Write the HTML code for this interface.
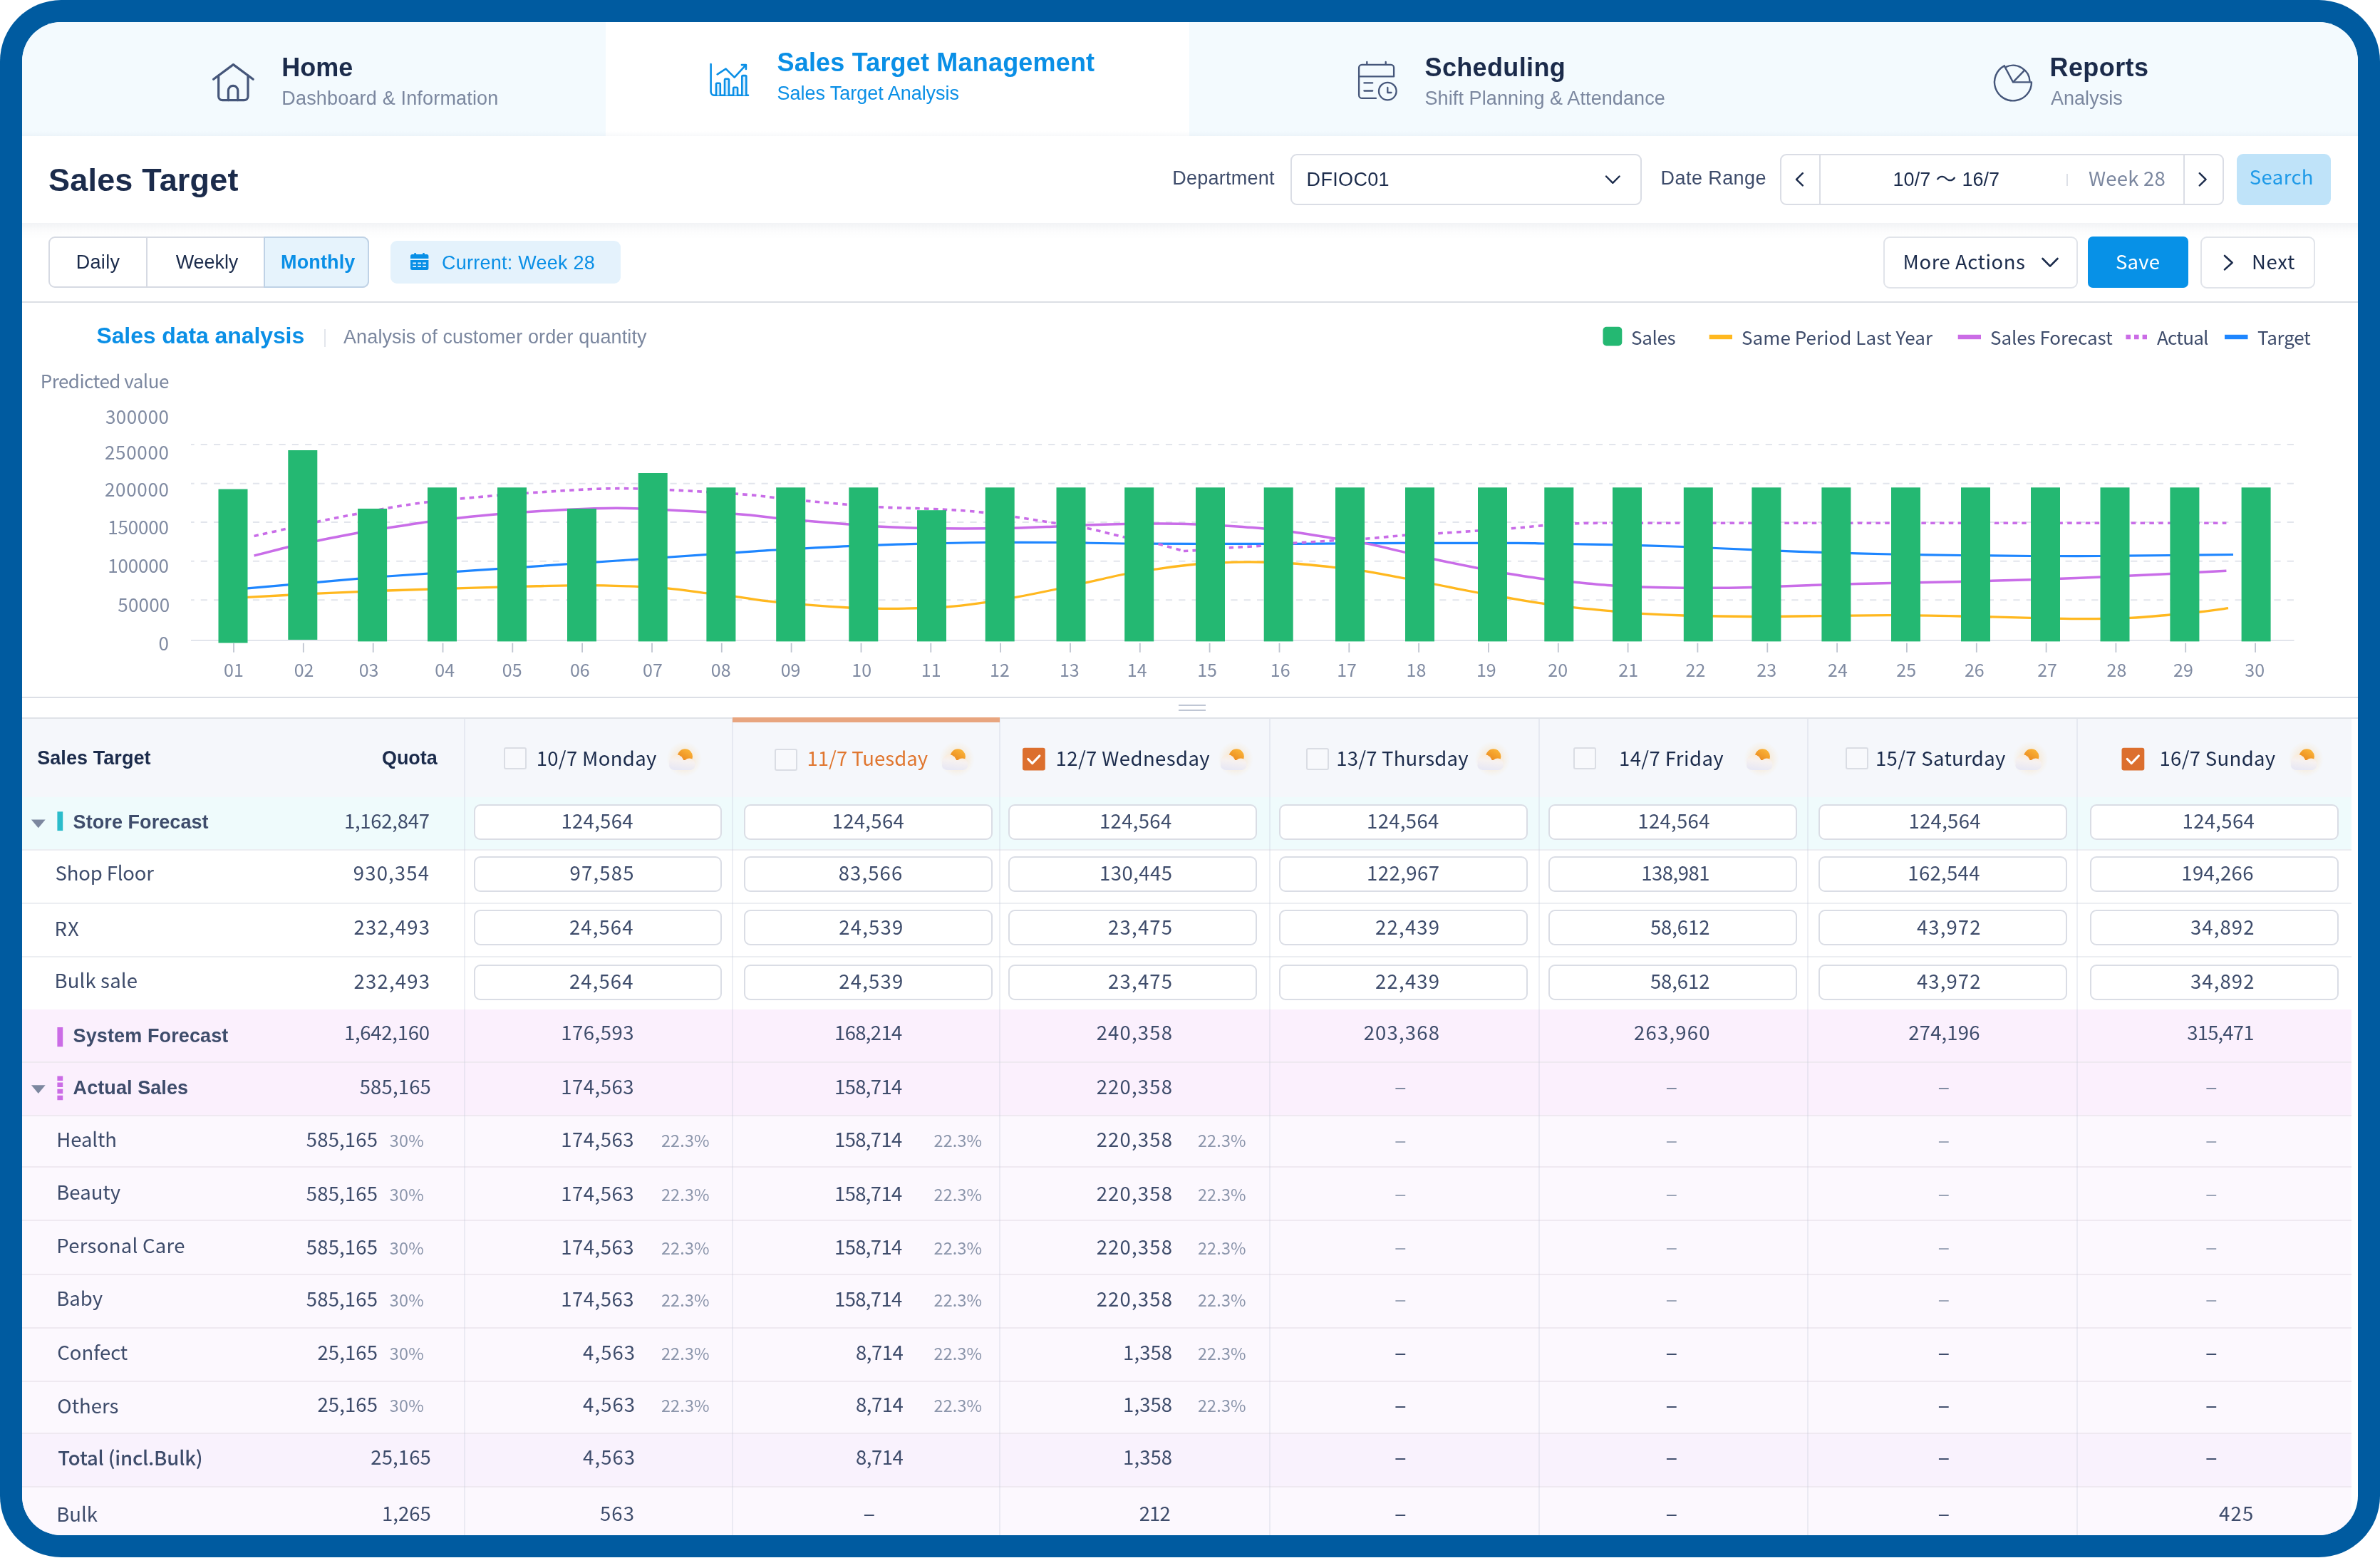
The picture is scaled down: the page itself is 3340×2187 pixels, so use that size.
<!DOCTYPE html>
<html lang="en"><head><meta charset="utf-8"><title>Sales Target</title>
<style>
html,body{margin:0;padding:0;background:#FFFFFF;overflow:hidden;}
body{width:3340px;height:2187px;position:relative;overflow:hidden;}
.frame{position:absolute;left:0;top:0;width:3340px;height:2186.3px;background:#005BA0;border-radius:86px;}
.screen{position:absolute;left:31px;top:31px;width:3277.5px;height:2124px;border-radius:55px;overflow:hidden;background:#FFFFFF;}
.page{position:absolute;left:-31px;top:-31px;width:3340px;height:2187px;will-change:transform;}
.b{position:absolute;}
.t{position:absolute;white-space:pre;line-height:1;}
.a{font-family:"Liberation Sans", Arial, sans-serif;}
.p{font-family:"Noto Sans CJK SC", "Liberation Sans", sans-serif;}
svg.v{position:absolute;left:0;top:0;}
</style></head><body>
<div class="frame"></div>
<div class="screen"><div class="page">
<div class="b" style="left:31.0px;top:31.0px;width:3278.0px;height:160.0px;background:#F3FAFE;"></div>
<div class="b" style="left:850.0px;top:31.0px;width:819.0px;height:160.0px;background:#FFFFFF;"></div>
<div class="b" style="left:31.0px;top:184.0px;width:3278.0px;height:7.0px;background:linear-gradient(to bottom,rgba(120,140,170,0),rgba(120,140,170,0.055));"></div>
<div class="b" style="left:31.0px;top:191.0px;width:3278.0px;height:122.0px;background:#FFFFFF;"></div>
<div class="b" style="left:31.0px;top:313.0px;width:3278.0px;height:22.0px;background:linear-gradient(to bottom,rgba(100,115,140,0.085),rgba(100,115,140,0.02) 55%,rgba(100,115,140,0));"></div>
<div class="b" style="left:1811.0px;top:216.0px;width:492.5px;height:72.0px;background:#FFF;border:2px solid #DADDE5;box-sizing:border-box;border-radius:9px;"></div>
<div class="b" style="left:2497.5px;top:216.0px;width:623.5px;height:72.0px;background:#FFF;border:2px solid #DADDE5;box-sizing:border-box;border-radius:9px;"></div>
<div class="b" style="left:2552.5px;top:217.0px;width:2.0px;height:70.0px;background:#DADDE5;"></div>
<div class="b" style="left:3063.8px;top:217.0px;width:2.0px;height:70.0px;background:#DADDE5;"></div>
<div class="b" style="left:2900.0px;top:243.5px;width:2.0px;height:17.5px;background:#DDE0E7;"></div>
<div class="b" style="left:3139.0px;top:216.0px;width:132.0px;height:72.0px;background:#BFE3F9;border-radius:9px;"></div>
<div class="b" style="left:31.0px;top:423.0px;width:3278.0px;height:2.0px;background:#DCDFE5;"></div>
<div class="b" style="left:68.0px;top:332.0px;width:450.0px;height:72.0px;background:#FFF;border:2px solid #D6DAE3;box-sizing:border-box;border-radius:9px;"></div>
<div class="b" style="left:204.5px;top:333.0px;width:2.0px;height:70.0px;background:#D6DAE3;"></div>
<div class="b" style="left:370.0px;top:332.0px;width:148.0px;height:72.0px;background:#E6F3FC;border:2px solid #BFD2E6;box-sizing:border-box;border-radius:0 9px 9px 0;"></div>
<div class="b" style="left:548.0px;top:338.0px;width:322.5px;height:60.0px;background:#E4F2FC;border-radius:9px;"></div>
<div class="b" style="left:2643.0px;top:331.5px;width:273.0px;height:73.5px;background:#FFF;border:2px solid #E1E4EA;box-sizing:border-box;border-radius:9px;"></div>
<div class="b" style="left:2930.0px;top:332.0px;width:141.0px;height:72.0px;background:#0791E7;border-radius:7px;"></div>
<div class="b" style="left:3088.0px;top:331.5px;width:161.0px;height:73.5px;background:#FFF;border:2px solid #E1E4EA;box-sizing:border-box;border-radius:9px;"></div>
<div class="b" style="left:454.8px;top:461.6px;width:1.8px;height:25.4px;background:#E3E6EC;"></div>
<div class="b" style="left:31.0px;top:977.5px;width:3278.0px;height:2.0px;background:#DCDFE6;"></div>
<div class="b" style="left:1653.5px;top:989.0px;width:38.5px;height:2.0px;background:#BFC6D4;"></div>
<div class="b" style="left:1653.5px;top:996.0px;width:38.5px;height:2.0px;background:#BFC6D4;"></div>
<div class="b" style="left:31.0px;top:1007.0px;width:3269.0px;height:111.5px;background:#F5F7FB;"></div>
<div class="b" style="left:31.0px;top:1006.5px;width:3278.0px;height:2.0px;background:#DFE2E8;"></div>
<div class="b" style="left:31.0px;top:1118.5px;width:3269.0px;height:74.0px;background:#EFFBFC;"></div>
<div class="b" style="left:31.0px;top:1192.5px;width:3269.0px;height:75.3px;background:#FFFFFF;"></div>
<div class="b" style="left:31.0px;top:1267.8px;width:3269.0px;height:74.9px;background:#FFFFFF;"></div>
<div class="b" style="left:31.0px;top:1342.7px;width:3269.0px;height:74.3px;background:#FFFFFF;"></div>
<div class="b" style="left:31.0px;top:1417.0px;width:3269.0px;height:74.0px;background:#FBF0FD;"></div>
<div class="b" style="left:31.0px;top:1491.0px;width:3269.0px;height:75.1px;background:#FBF0FD;"></div>
<div class="b" style="left:31.0px;top:1566.1px;width:3269.0px;height:72.2px;background:#FCF8FE;"></div>
<div class="b" style="left:31.0px;top:1638.3px;width:3269.0px;height:75.1px;background:#FCF8FE;"></div>
<div class="b" style="left:31.0px;top:1713.4px;width:3269.0px;height:75.3px;background:#FCF8FE;"></div>
<div class="b" style="left:31.0px;top:1788.7px;width:3269.0px;height:75.2px;background:#FCF8FE;"></div>
<div class="b" style="left:31.0px;top:1863.9px;width:3269.0px;height:74.7px;background:#FCF8FE;"></div>
<div class="b" style="left:31.0px;top:1938.6px;width:3269.0px;height:73.2px;background:#FCF8FE;"></div>
<div class="b" style="left:31.0px;top:2011.8px;width:3269.0px;height:75.4px;background:#F9F2FD;"></div>
<div class="b" style="left:31.0px;top:2087.2px;width:3269.0px;height:74.8px;background:#FCF8FE;"></div>
<div class="b" style="left:31.0px;top:1191.5px;width:3269.0px;height:2.0px;background:#ECEEF2;"></div>
<div class="b" style="left:31.0px;top:1266.8px;width:3269.0px;height:2.0px;background:#ECEEF2;"></div>
<div class="b" style="left:31.0px;top:1341.7px;width:3269.0px;height:2.0px;background:#ECEEF2;"></div>
<div class="b" style="left:31.0px;top:1490.0px;width:3269.0px;height:2.0px;background:#EFE9F1;"></div>
<div class="b" style="left:31.0px;top:1565.1px;width:3269.0px;height:2.0px;background:#EFE9F1;"></div>
<div class="b" style="left:31.0px;top:1637.3px;width:3269.0px;height:2.0px;background:#EFE9F1;"></div>
<div class="b" style="left:31.0px;top:1712.4px;width:3269.0px;height:2.0px;background:#EFE9F1;"></div>
<div class="b" style="left:31.0px;top:1787.7px;width:3269.0px;height:2.0px;background:#EFE9F1;"></div>
<div class="b" style="left:31.0px;top:1862.9px;width:3269.0px;height:2.0px;background:#EFE9F1;"></div>
<div class="b" style="left:31.0px;top:1937.6px;width:3269.0px;height:2.0px;background:#EFE9F1;"></div>
<div class="b" style="left:31.0px;top:2010.8px;width:3269.0px;height:2.0px;background:#EFE9F1;"></div>
<div class="b" style="left:31.0px;top:2086.2px;width:3269.0px;height:2.0px;background:#EFE9F1;"></div>
<div class="b" style="left:650.6px;top:1008.5px;width:2.0px;height:1147.5px;background:rgba(196,202,218,0.30);"></div>
<div class="b" style="left:1026.5px;top:1008.5px;width:2.0px;height:1147.5px;background:rgba(196,202,218,0.30);"></div>
<div class="b" style="left:1402.4px;top:1008.5px;width:2.0px;height:1147.5px;background:rgba(196,202,218,0.30);"></div>
<div class="b" style="left:1781.0px;top:1008.5px;width:2.0px;height:1147.5px;background:rgba(196,202,218,0.30);"></div>
<div class="b" style="left:2158.8px;top:1008.5px;width:2.0px;height:1147.5px;background:rgba(196,202,218,0.30);"></div>
<div class="b" style="left:2536.3px;top:1008.5px;width:2.0px;height:1147.5px;background:rgba(196,202,218,0.30);"></div>
<div class="b" style="left:2914.0px;top:1008.5px;width:2.0px;height:1147.5px;background:rgba(196,202,218,0.30);"></div>
<div class="b" style="left:1027.5px;top:1007.0px;width:375.9px;height:6.6px;background:#E8A57F;"></div>
<div class="b" style="left:707.0px;top:1048.6px;width:31.6px;height:31.4px;background:#F8F9FC;border:2px solid #DADDE4;box-sizing:border-box;border-radius:3px;"></div>
<div class="b" style="left:1087.0px;top:1050.6px;width:31.6px;height:31.4px;background:#F8F9FC;border:2px solid #DADDE4;box-sizing:border-box;border-radius:3px;"></div>
<div class="b" style="left:1833.0px;top:1049.6px;width:31.6px;height:31.4px;background:#F8F9FC;border:2px solid #DADDE4;box-sizing:border-box;border-radius:3px;"></div>
<div class="b" style="left:2208.4px;top:1048.8px;width:31.6px;height:31.4px;background:#F8F9FC;border:2px solid #DADDE4;box-sizing:border-box;border-radius:3px;"></div>
<div class="b" style="left:2590.0px;top:1048.8px;width:31.6px;height:31.4px;background:#F8F9FC;border:2px solid #DADDE4;box-sizing:border-box;border-radius:3px;"></div>
<div class="b" style="left:664.6px;top:1128.7px;width:348.6px;height:50.5px;background:#FFF;border:2px solid #DADDE5;box-sizing:border-box;border-radius:9px;"></div>
<div class="b" style="left:1044.4px;top:1128.7px;width:349.0px;height:50.5px;background:#FFF;border:2px solid #DADDE5;box-sizing:border-box;border-radius:9px;"></div>
<div class="b" style="left:1415.0px;top:1128.7px;width:349.4px;height:50.5px;background:#FFF;border:2px solid #DADDE5;box-sizing:border-box;border-radius:9px;"></div>
<div class="b" style="left:1795.0px;top:1128.7px;width:349.2px;height:50.5px;background:#FFF;border:2px solid #DADDE5;box-sizing:border-box;border-radius:9px;"></div>
<div class="b" style="left:2172.8px;top:1128.7px;width:349.0px;height:50.5px;background:#FFF;border:2px solid #DADDE5;box-sizing:border-box;border-radius:9px;"></div>
<div class="b" style="left:2552.4px;top:1128.7px;width:349.0px;height:50.5px;background:#FFF;border:2px solid #DADDE5;box-sizing:border-box;border-radius:9px;"></div>
<div class="b" style="left:2932.6px;top:1128.7px;width:349.0px;height:50.5px;background:#FFF;border:2px solid #DADDE5;box-sizing:border-box;border-radius:9px;"></div>
<div class="b" style="left:664.6px;top:1201.7px;width:348.6px;height:50.5px;background:#FFF;border:2px solid #DADDE5;box-sizing:border-box;border-radius:9px;"></div>
<div class="b" style="left:1044.4px;top:1201.7px;width:349.0px;height:50.5px;background:#FFF;border:2px solid #DADDE5;box-sizing:border-box;border-radius:9px;"></div>
<div class="b" style="left:1415.0px;top:1201.7px;width:349.4px;height:50.5px;background:#FFF;border:2px solid #DADDE5;box-sizing:border-box;border-radius:9px;"></div>
<div class="b" style="left:1795.0px;top:1201.7px;width:349.2px;height:50.5px;background:#FFF;border:2px solid #DADDE5;box-sizing:border-box;border-radius:9px;"></div>
<div class="b" style="left:2172.8px;top:1201.7px;width:349.0px;height:50.5px;background:#FFF;border:2px solid #DADDE5;box-sizing:border-box;border-radius:9px;"></div>
<div class="b" style="left:2552.4px;top:1201.7px;width:349.0px;height:50.5px;background:#FFF;border:2px solid #DADDE5;box-sizing:border-box;border-radius:9px;"></div>
<div class="b" style="left:2932.6px;top:1201.7px;width:349.0px;height:50.5px;background:#FFF;border:2px solid #DADDE5;box-sizing:border-box;border-radius:9px;"></div>
<div class="b" style="left:664.6px;top:1276.7px;width:348.6px;height:50.6px;background:#FFF;border:2px solid #DADDE5;box-sizing:border-box;border-radius:9px;"></div>
<div class="b" style="left:1044.4px;top:1276.7px;width:349.0px;height:50.6px;background:#FFF;border:2px solid #DADDE5;box-sizing:border-box;border-radius:9px;"></div>
<div class="b" style="left:1415.0px;top:1276.7px;width:349.4px;height:50.6px;background:#FFF;border:2px solid #DADDE5;box-sizing:border-box;border-radius:9px;"></div>
<div class="b" style="left:1795.0px;top:1276.7px;width:349.2px;height:50.6px;background:#FFF;border:2px solid #DADDE5;box-sizing:border-box;border-radius:9px;"></div>
<div class="b" style="left:2172.8px;top:1276.7px;width:349.0px;height:50.6px;background:#FFF;border:2px solid #DADDE5;box-sizing:border-box;border-radius:9px;"></div>
<div class="b" style="left:2552.4px;top:1276.7px;width:349.0px;height:50.6px;background:#FFF;border:2px solid #DADDE5;box-sizing:border-box;border-radius:9px;"></div>
<div class="b" style="left:2932.6px;top:1276.7px;width:349.0px;height:50.6px;background:#FFF;border:2px solid #DADDE5;box-sizing:border-box;border-radius:9px;"></div>
<div class="b" style="left:664.6px;top:1353.9px;width:348.6px;height:50.6px;background:#FFF;border:2px solid #DADDE5;box-sizing:border-box;border-radius:9px;"></div>
<div class="b" style="left:1044.4px;top:1353.9px;width:349.0px;height:50.6px;background:#FFF;border:2px solid #DADDE5;box-sizing:border-box;border-radius:9px;"></div>
<div class="b" style="left:1415.0px;top:1353.9px;width:349.4px;height:50.6px;background:#FFF;border:2px solid #DADDE5;box-sizing:border-box;border-radius:9px;"></div>
<div class="b" style="left:1795.0px;top:1353.9px;width:349.2px;height:50.6px;background:#FFF;border:2px solid #DADDE5;box-sizing:border-box;border-radius:9px;"></div>
<div class="b" style="left:2172.8px;top:1353.9px;width:349.0px;height:50.6px;background:#FFF;border:2px solid #DADDE5;box-sizing:border-box;border-radius:9px;"></div>
<div class="b" style="left:2552.4px;top:1353.9px;width:349.0px;height:50.6px;background:#FFF;border:2px solid #DADDE5;box-sizing:border-box;border-radius:9px;"></div>
<div class="b" style="left:2932.6px;top:1353.9px;width:349.0px;height:50.6px;background:#FFF;border:2px solid #DADDE5;box-sizing:border-box;border-radius:9px;"></div>
<svg class="v" width="3340" height="2187" viewBox="0 0 3340 2187"><defs><radialGradient id="wglow" cx="0.5" cy="0.5" r="0.5"><stop offset="0" stop-color="#FBAE3C" stop-opacity="0.5"/><stop offset="0.5" stop-color="#FBC063" stop-opacity="0.2"/><stop offset="1" stop-color="#FBD08A" stop-opacity="0"/></radialGradient><linearGradient id="wsun" x1="0.8" y1="0.1" x2="0.3" y2="0.95"><stop offset="0" stop-color="#FAB236"/><stop offset="1" stop-color="#E8821B"/></linearGradient><radialGradient id="wtint" cx="0.5" cy="0.5" r="0.5"><stop offset="0" stop-color="#FBD9A8" stop-opacity="0.55"/><stop offset="1" stop-color="#FBD9A8" stop-opacity="0"/></radialGradient><linearGradient id="wcloud" gradientUnits="userSpaceOnUse" x1="20" y1="8" x2="17" y2="30"><stop offset="0" stop-color="#FCEBD6"/><stop offset="0.45" stop-color="#F6F1F0"/><stop offset="1" stop-color="#E8E8F4"/></linearGradient><g id="wx"><circle cx="21" cy="15" r="25" fill="url(#wglow)"/><circle cx="22.3" cy="11.3" r="10.6" fill="url(#wsun)"/><g fill="url(#wcloud)"><circle cx="10.1" cy="18.9" r="10.2"/><circle cx="28.3" cy="21.9" r="8.1"/><rect x="-0.1" y="16.3" width="36.5" height="14" rx="7"/><rect x="8" y="20" width="22" height="10.1"/></g></g></defs>
<g fill="none" stroke="#45567A" stroke-width="3.2" stroke-linecap="round" stroke-linejoin="round"><path d="M299.6 111.3 L327.4 90.6 L355.2 111.3"/><path d="M306.7 106 V135.2 a5.4 5.4 0 0 0 5.4 5.4 H342.6 a5.4 5.4 0 0 0 5.4 -5.4 V106"/><path d="M320.4 140.6 V127 a6.7 6.7 0 0 1 13.4 0 V140.6"/></g>
<g fill="none" stroke="#0A8FE6" stroke-width="2.6" stroke-linecap="round" stroke-linejoin="round"><path d="M997.6 90 V128.8 a5 5 0 0 0 5 5 H1050"/><path fill="#D6EEFF" d="M1005 133.8 V118 a1.2 1.2 0 0 1 1.2 -1.2 h3.4 a1.2 1.2 0 0 1 1.2 1.2 V133.8"/><path fill="#D6EEFF" d="M1017 133.8 V111.9 a1.2 1.2 0 0 1 1.2 -1.2 h3.6 a1.2 1.2 0 0 1 1.2 1.2 V133.8"/><path fill="#D6EEFF" d="M1029.1 133.8 V123.9 a1.2 1.2 0 0 1 1.2 -1.2 h3.6 a1.2 1.2 0 0 1 1.2 1.2 V133.8"/><path fill="#D6EEFF" d="M1041.3 133.8 V107.3 a1.2 1.2 0 0 1 1.2 -1.2 h3.6 a1.2 1.2 0 0 1 1.2 1.2 V133.8"/><path d="M1006.7 104.4 L1018.6 96.6 L1030.7 108.7 L1046.6 91.4"/><path d="M1040.9 91.1 H1046.9 V96.9"/></g>
<g fill="none" stroke="#45567A" stroke-width="2.3" stroke-linecap="round" stroke-linejoin="round"><path d="M1931 137.9 H1911.6 a4.5 4.5 0 0 1 -4.5 -4.5 V95 a4.1 4.1 0 0 1 4.1 -4.1 H1952 a4.1 4.1 0 0 1 4.1 4.1 V107.4 H1907.1"/><path d="M1918.3 87 V90.9 M1944.7 87 V90.9"/><path d="M1914.4 116.4 H1926.2 M1914.4 127.5 H1926.2"/><circle cx="1947.3" cy="128.1" r="12.3"/><path d="M1947.3 123 V130 H1952.5"/></g>
<g fill="none" stroke="#45567A" stroke-width="2.4" stroke-linejoin="miter"><path d="M2812.8 92.4 A26 26 0 1 0 2851.0 115.4 h0.9 H2825.0 Z"/><path d="M2814.7 94.2 A23.6 23.6 0 0 1 2848.6 114.6"/><path d="M2825.0 115.4 L2841.4 98.4"/></g>
<path d="M2254 247.5 L2263.3 256.8 L2272.6 247.5" fill="none" stroke="#1B2B4B" stroke-width="2.4" stroke-linecap="round" stroke-linejoin="round"/>
<path d="M2529.8 243.2 L2521 251.8 L2529.8 260.4" fill="none" stroke="#1B2B4B" stroke-width="2.4" stroke-linecap="round" stroke-linejoin="round"/>
<path d="M3086.8 243.2 L3095.6 251.8 L3086.8 260.4" fill="none" stroke="#1B2B4B" stroke-width="2.4" stroke-linecap="round" stroke-linejoin="round"/>
<g fill="#088FE6"><path d="M576 362.9 V359.5 a2.5 2.5 0 0 1 2.5 -2.5 H598.9 a2.5 2.5 0 0 1 2.5 2.5 V362.9 Z"/><rect x="581.1" y="355" width="3" height="4" rx="1.4"/><rect x="593" y="355" width="3" height="4" rx="1.4"/><path fill-rule="evenodd" d="M576 364.9 H601.4 V376.6 a2.5 2.5 0 0 1 -2.5 2.5 H578.5 a2.5 2.5 0 0 1 -2.5 -2.5 Z M579.3 368.6 h4.7 v1.8 h-4.7 Z M586.3 368.6 h4.7 v1.8 h-4.7 Z M593.2 368.6 h4.7 v1.8 h-4.7 Z M579.3 373.2 h4.7 v1.8 h-4.7 Z M586.3 373.2 h4.7 v1.8 h-4.7 Z M593.2 373.2 h4.7 v1.8 h-4.7 Z"/></g>
<path d="M2866.5 363 L2877 373.6 L2887.5 363" fill="none" stroke="#1B2B4B" stroke-width="2.6" stroke-linecap="round" stroke-linejoin="round"/>
<path d="M3122 359 L3132.6 368.7 L3122 378.4" fill="none" stroke="#1B2B4B" stroke-width="2.6" stroke-linecap="round" stroke-linejoin="round"/>
<rect x="2249.5" y="458.7" width="26.8" height="26.8" rx="5" fill="#24B872"/>
<rect x="2398.7" y="469.8" width="32.3" height="6.4" fill="#FFB81F"/>
<rect x="2747.7" y="469.8" width="32.3" height="6.4" fill="#CB6CE6"/>
<path d="M2983.4 473 H3013" stroke="#CB6CE6" stroke-width="6.4" stroke-dasharray="6.6 5" fill="none"/>
<rect x="3122" y="469.8" width="32.5" height="6.4" fill="#1E86FF"/>
<path d="M268 624 H3219.5" stroke="#E2E5EC" stroke-width="2" stroke-dasharray="9.2 9.1" stroke-dashoffset="4.6" fill="none"/>
<path d="M268 678.8 H3219.5" stroke="#E2E5EC" stroke-width="2" stroke-dasharray="9.2 9.1" stroke-dashoffset="4.6" fill="none"/>
<path d="M268 733.1 H3219.5" stroke="#E2E5EC" stroke-width="2" stroke-dasharray="9.2 9.1" stroke-dashoffset="4.6" fill="none"/>
<path d="M268 787.7 H3219.5" stroke="#E2E5EC" stroke-width="2" stroke-dasharray="9.2 9.1" stroke-dashoffset="4.6" fill="none"/>
<path d="M268 842.3 H3219.5" stroke="#E2E5EC" stroke-width="2" stroke-dasharray="9.2 9.1" stroke-dashoffset="4.6" fill="none"/>
<path d="M268 899 H3219.5" stroke="#E2E5EC" stroke-width="2.2" fill="none"/>
<path d="M328.0 839.6 C331.2 839.4 327.9 839.5 347.4 838.4 C366.9 837.3 412.4 834.8 445.0 833.2 C477.6 831.6 510.3 830.2 543.0 829.0 C575.7 827.8 608.4 826.8 641.0 825.8 C673.6 824.8 709.7 823.8 738.8 823.1 C767.9 822.4 792.2 821.7 815.7 821.6 C839.2 821.5 859.8 822.1 880.0 822.8 C900.2 823.5 918.3 824.1 936.8 825.8 C955.3 827.4 975.1 830.8 991.0 832.7 C1006.9 834.6 1015.7 835.2 1032.0 837.3 C1048.3 839.4 1062.5 842.6 1089.0 845.2 C1115.5 847.8 1164.7 851.5 1191.0 853.0 C1217.3 854.5 1224.2 854.6 1247.0 854.4 C1269.8 854.2 1305.4 853.5 1328.0 852.0 C1350.6 850.5 1366.6 847.8 1382.6 845.6 C1398.6 843.4 1407.3 841.8 1424.0 838.7 C1440.7 835.6 1465.9 830.5 1482.5 827.0 C1499.1 823.5 1507.7 821.5 1523.6 818.0 C1539.5 814.5 1562.1 809.1 1578.0 806.0 C1593.9 802.9 1602.3 801.7 1619.0 799.4 C1635.7 797.1 1656.0 793.8 1678.0 792.0 C1700.0 790.2 1728.2 789.0 1751.0 788.8 C1773.8 788.6 1794.5 789.7 1815.0 791.0 C1835.5 792.3 1857.3 794.8 1874.0 796.6 C1890.7 798.4 1898.7 799.1 1915.0 801.7 C1931.3 804.3 1955.7 809.0 1972.0 812.0 C1988.3 815.0 1996.0 816.7 2013.0 820.0 C2030.0 823.3 2057.0 828.8 2074.0 832.0 C2091.0 835.2 2099.5 836.4 2115.0 839.0 C2130.5 841.6 2151.5 845.2 2167.0 847.5 C2182.5 849.8 2192.0 850.9 2208.0 852.6 C2224.0 854.4 2247.0 856.5 2263.0 858.0 C2279.0 859.5 2287.3 860.4 2304.0 861.4 C2320.7 862.4 2337.3 863.3 2363.0 864.0 C2388.7 864.7 2425.8 865.4 2458.0 865.5 C2490.2 865.6 2523.3 864.9 2556.0 864.6 C2588.7 864.3 2621.3 863.6 2654.0 863.7 C2686.7 863.8 2719.3 864.4 2752.0 865.0 C2784.7 865.6 2821.7 866.8 2850.0 867.4 C2878.3 868.0 2898.9 868.7 2922.0 868.7 C2945.1 868.7 2968.1 868.4 2988.6 867.4 C3009.1 866.4 3028.7 864.4 3045.0 863.0 C3061.3 861.6 3072.9 860.5 3086.6 859.0 C3100.3 857.5 3120.3 854.6 3127.0 853.7" fill="none" stroke="#FFB81F" stroke-width="3.3" stroke-linecap="butt"/>
<path d="M328.0 827.5 C331.2 827.2 327.9 827.5 347.4 825.8 C366.9 824.1 412.4 820.2 445.0 817.4 C477.6 814.6 510.3 811.5 543.0 809.0 C575.7 806.5 608.4 804.5 641.0 802.3 C673.6 800.1 674.0 800.2 738.8 795.8 C803.6 791.4 971.6 779.8 1030.0 775.8 C1088.4 771.8 1062.2 773.5 1089.0 772.0 C1115.8 770.5 1158.0 768.0 1191.0 766.6 C1224.0 765.2 1255.1 764.2 1287.0 763.4 C1318.9 762.5 1350.0 761.8 1382.6 761.5 C1415.2 761.2 1449.9 761.2 1482.5 761.5 C1515.1 761.8 1545.4 762.7 1578.0 763.0 C1610.6 763.3 1638.4 763.3 1678.0 763.4 C1717.6 763.5 1766.7 763.6 1815.7 763.4 C1864.7 763.2 1919.6 762.6 1972.0 762.4 C2024.4 762.2 2097.5 762.3 2130.0 762.4 C2162.5 762.5 2144.8 762.6 2167.0 763.0 C2189.2 763.4 2230.3 764.0 2263.0 764.7 C2295.7 765.5 2330.5 766.3 2363.0 767.5 C2395.5 768.7 2425.8 770.4 2458.0 771.7 C2490.2 773.0 2523.3 774.4 2556.0 775.4 C2588.7 776.4 2621.3 777.3 2654.0 778.0 C2686.7 778.7 2719.3 779.1 2752.0 779.5 C2784.7 779.9 2817.4 780.3 2850.0 780.5 C2882.6 780.7 2915.0 780.7 2947.5 780.5 C2980.0 780.3 3013.9 779.8 3045.0 779.5 C3076.1 779.2 3119.2 778.7 3134.0 778.5" fill="none" stroke="#1E86FF" stroke-width="3.2"/>
<path d="M356.6 780.0 C364.5 778.0 389.3 771.5 404.0 768.0 C418.7 764.5 428.7 762.5 445.0 759.2 C461.3 755.9 485.7 751.0 502.0 748.0 C518.3 745.0 526.7 743.8 543.0 741.2 C559.3 738.6 583.7 734.7 600.0 732.4 C616.3 730.1 624.7 729.3 641.0 727.5 C657.3 725.7 674.8 723.7 698.0 721.8 C721.2 719.9 749.7 717.6 780.0 716.2 C810.3 714.8 838.3 712.5 880.0 713.4 C921.7 714.2 995.2 719.0 1030.0 721.3 C1064.8 723.6 1072.3 725.7 1089.0 727.3 C1105.7 728.9 1113.0 729.5 1130.0 731.0 C1147.0 732.5 1174.0 734.7 1191.0 736.0 C1208.0 737.3 1216.0 738.0 1232.0 738.9 C1248.0 739.8 1266.8 740.7 1287.0 741.2 C1307.2 741.7 1330.7 742.0 1353.5 742.0 C1376.3 742.0 1402.5 741.7 1424.0 741.2 C1445.5 740.7 1465.9 739.6 1482.5 738.9 C1499.1 738.2 1507.7 737.5 1523.6 737.0 C1539.5 736.5 1560.1 735.9 1578.0 735.6 C1595.9 735.3 1614.3 734.9 1631.0 735.0 C1647.7 735.1 1663.3 735.5 1678.0 736.0 C1692.7 736.5 1703.0 737.0 1719.0 738.0 C1735.0 739.0 1757.7 740.5 1773.7 742.0 C1789.7 743.5 1798.3 744.4 1815.0 746.7 C1831.7 749.0 1857.3 753.4 1874.0 756.0 C1890.7 758.6 1898.7 759.2 1915.0 762.4 C1931.3 765.6 1955.7 771.6 1972.0 775.4 C1988.3 779.2 1996.0 781.3 2013.0 785.0 C2030.0 788.7 2057.0 794.2 2074.0 797.5 C2091.0 800.8 2099.5 802.5 2115.0 805.0 C2130.5 807.5 2151.5 810.8 2167.0 812.8 C2182.5 814.8 2192.0 815.5 2208.0 817.0 C2224.0 818.5 2247.0 820.8 2263.0 822.0 C2279.0 823.2 2287.3 823.5 2304.0 824.0 C2320.7 824.5 2346.3 825.1 2363.0 825.3 C2379.7 825.5 2388.2 825.4 2404.0 825.3 C2419.8 825.1 2432.7 825.1 2458.0 824.4 C2483.3 823.7 2523.3 822.0 2556.0 821.0 C2588.7 820.0 2621.3 819.1 2654.0 818.4 C2686.7 817.6 2719.3 817.3 2752.0 816.5 C2784.7 815.7 2817.4 814.8 2850.0 813.7 C2882.6 812.6 2915.0 811.4 2947.5 810.0 C2980.0 808.6 3015.5 806.9 3045.0 805.4 C3074.5 803.9 3111.2 801.9 3124.4 801.2" fill="none" stroke="#C96DE8" stroke-width="3.5"/>
<path d="M356.6 752.5 C364.5 750.7 389.3 745.1 404.0 741.8 C418.7 738.4 421.8 737.1 445.0 732.4 C468.2 727.7 517.2 718.0 543.0 713.4 C568.8 708.8 583.7 706.9 600.0 704.7 C616.3 702.5 614.3 702.7 641.0 700.4 C667.7 698.1 720.2 693.2 760.0 690.8 C799.8 688.3 835.0 685.3 880.0 685.7 C925.0 686.1 995.3 690.8 1030.0 693.0 C1064.7 695.2 1071.3 697.0 1088.0 698.7 C1104.7 700.4 1106.0 700.9 1130.0 703.0 C1154.0 705.1 1202.5 709.7 1232.0 711.6 C1261.5 713.5 1282.2 713.1 1307.0 714.4 C1331.8 715.7 1351.7 716.1 1381.0 719.5 C1410.3 722.9 1459.2 731.1 1483.0 734.7 C1506.8 738.3 1507.8 737.8 1523.6 741.0 C1539.4 744.2 1562.1 750.5 1578.0 754.0 C1593.9 757.5 1605.2 758.8 1619.0 762.0 C1632.8 765.2 1654.0 771.6 1661.0 773.5 " fill="none" stroke="#C96DE8" stroke-width="3.6" stroke-dasharray="6.5 6.3"/>
<path d="M1661.0 773.5 C1663.7 773.4 1666.7 773.4 1677.0 772.6 C1687.3 771.9 1706.8 770.1 1723.0 769.0 C1739.2 767.9 1758.5 767.1 1774.0 766.0 C1789.5 764.9 1799.0 763.6 1815.7 762.4 C1832.4 761.2 1857.5 759.7 1874.0 758.7 C1890.5 757.7 1898.7 757.6 1915.0 756.4 C1931.3 755.2 1955.7 752.5 1972.0 751.3 C1988.3 750.1 1996.0 750.0 2013.0 749.0 C2030.0 748.0 2054.5 746.3 2074.0 745.0 C2093.5 743.7 2114.5 742.2 2130.0 741.0 C2145.5 739.8 2152.8 738.5 2167.0 737.5 C2181.2 736.5 2199.2 735.2 2215.0 734.7 C2230.8 734.2 2254.2 734.3 2262.0 734.2 L3124.4 734.2" fill="none" stroke="#C96DE8" stroke-width="3.6" stroke-dasharray="6.5 6.3"/>
<g fill="#24B872"><rect x="306.5" y="686.6" width="41" height="215.9"/><rect x="404.3" y="632.0" width="41" height="266.0"/><rect x="502.1" y="714.0" width="41" height="186.4"/><rect x="600.0" y="684.3" width="41" height="216.1"/><rect x="698.0" y="684.3" width="41" height="216.1"/><rect x="796.0" y="714.0" width="41" height="186.4"/><rect x="895.7" y="664.0" width="41" height="236.4"/><rect x="991.4" y="684.3" width="41" height="216.1"/><rect x="1089.2" y="684.3" width="41" height="216.1"/><rect x="1191.3" y="684.3" width="41" height="216.1"/><rect x="1287.0" y="716.2" width="41" height="184.2"/><rect x="1382.7" y="684.3" width="41" height="216.1"/><rect x="1482.5" y="684.3" width="41" height="216.1"/><rect x="1578.2" y="684.3" width="41" height="216.1"/><rect x="1678.0" y="684.3" width="41" height="216.1"/><rect x="1773.7" y="684.3" width="41" height="216.1"/><rect x="1874.0" y="684.3" width="41" height="216.1"/><rect x="1972.0" y="684.3" width="41" height="216.1"/><rect x="2074.0" y="684.3" width="41" height="216.1"/><rect x="2167.3" y="684.3" width="41" height="216.1"/><rect x="2263.0" y="684.3" width="41" height="216.1"/><rect x="2362.8" y="684.3" width="41" height="216.1"/><rect x="2458.4" y="684.3" width="41" height="216.1"/><rect x="2556.4" y="684.3" width="41" height="216.1"/><rect x="2654.0" y="684.3" width="41" height="216.1"/><rect x="2752.0" y="684.3" width="41" height="216.1"/><rect x="2850.0" y="684.3" width="41" height="216.1"/><rect x="2947.5" y="684.3" width="41" height="216.1"/><rect x="3045.4" y="684.3" width="41" height="216.1"/><rect x="3145.6" y="684.3" width="41" height="216.1"/></g>
<path d="M328.0 902.8 V915.8 M425.8 902.8 V915.8 M523.7 902.8 V915.8 M621.5 902.8 V915.8 M719.3 902.8 V915.8 M817.1 902.8 V915.8 M915.0 902.8 V915.8 M1012.8 902.8 V915.8 M1110.6 902.8 V915.8 M1208.5 902.8 V915.8 M1306.3 902.8 V915.8 M1404.1 902.8 V915.8 M1502.0 902.8 V915.8 M1599.8 902.8 V915.8 M1697.6 902.8 V915.8 M1795.5 902.8 V915.8 M1893.3 902.8 V915.8 M1991.1 902.8 V915.8 M2088.9 902.8 V915.8 M2186.8 902.8 V915.8 M2284.6 902.8 V915.8 M2382.4 902.8 V915.8 M2480.3 902.8 V915.8 M2578.1 902.8 V915.8 M2675.9 902.8 V915.8 M2773.8 902.8 V915.8 M2871.6 902.8 V915.8 M2969.4 902.8 V915.8 M3067.2 902.8 V915.8 M3165.1 902.8 V915.8 " stroke="#BFC5D1" stroke-width="1.8" fill="none"/>
<use href="#wx" x="939.1" y="1050.6"/>
<use href="#wx" x="1322.0" y="1050.6"/>
<rect x="1435.0" y="1049.7" width="31.8" height="31.8" rx="3" fill="#DC6F2E"/><path d="M1442.7 1065.4 L1448.7 1071.6 L1458.9 1060.9" fill="none" stroke="#FFF" stroke-width="3" stroke-linecap="round" stroke-linejoin="round"/>
<use href="#wx" x="1713.0" y="1050.6"/>
<use href="#wx" x="2073.5" y="1050.6"/>
<use href="#wx" x="2451.1" y="1050.6"/>
<use href="#wx" x="2828.5" y="1050.6"/>
<rect x="2977.5" y="1049.7" width="31.8" height="31.8" rx="3" fill="#DC6F2E"/><path d="M2985.2 1065.4 L2991.2 1071.6 L3001.4 1060.9" fill="none" stroke="#FFF" stroke-width="3" stroke-linecap="round" stroke-linejoin="round"/>
<use href="#wx" x="3215.0" y="1050.6"/>
<path d="M43.9 1150.4 H63.7 L53.8 1162.2 Z" fill="#7C879F"/>
<path d="M43.9 1523.2 H63.7 L53.8 1535 Z" fill="#7C879F"/>
<rect x="80.4" y="1139.3" width="7.8" height="26.8" fill="#2BBCCB"/>
<rect x="80.4" y="1442" width="7.8" height="27.3" fill="#CB6CE6"/>
<path d="M84.3 1510.5 V1544.4" stroke="#CB6CE6" stroke-width="7.8" stroke-dasharray="6.5 2.6" fill="none"/>
</svg>
<div class="t a" style="left:395.30px;top:77.00px;font-size:36px;color:#1B2B4B;font-weight:700;">Home</div>
<div class="t a" style="left:395.30px;top:125.00px;font-size:27px;color:#7B879F;letter-spacing:0.175px;">Dashboard &amp; Information</div>
<div class="t a" style="left:1090.50px;top:70.00px;font-size:36px;color:#0A8FE6;font-weight:700;letter-spacing:0.187px;">Sales Target Management</div>
<div class="t a" style="left:1090.50px;top:118.00px;font-size:27px;color:#0A8FE6;letter-spacing:-0.031px;">Sales Target Analysis</div>
<div class="t a" style="left:1999.50px;top:77.00px;font-size:36px;color:#1B2B4B;font-weight:700;letter-spacing:0.364px;">Scheduling</div>
<div class="t a" style="left:1999.50px;top:125.00px;font-size:27px;color:#7B879F;letter-spacing:0.099px;">Shift Planning &amp; Attendance</div>
<div class="t a" style="left:2876.50px;top:77.00px;font-size:36px;color:#1B2B4B;font-weight:700;letter-spacing:0.417px;">Reports</div>
<div class="t a" style="left:2878.00px;top:125.00px;font-size:27px;color:#7B879F;letter-spacing:0.023px;">Analysis</div>
<div class="t a" style="left:68.00px;top:230.00px;font-size:45px;color:#1B2B4B;font-weight:700;letter-spacing:0.200px;">Sales Target</div>
<div class="t a" style="left:1645.30px;top:237.00px;font-size:27px;color:#3E4C6B;letter-spacing:0.249px;">Department</div>
<div class="t a" style="left:1833.60px;top:239.00px;font-size:27px;color:#1B2B4B;letter-spacing:0.332px;">DFIOC01</div>
<div class="t a" style="left:2330.60px;top:237.00px;font-size:27px;color:#3E4C6B;letter-spacing:0.424px;">Date Range</div>
<div class="t a" style="left:2656.60px;top:239.00px;font-size:27px;color:#1B2B4B;">10/7</div>
<div class="t p" style="left:2716.50px;top:235.00px;font-size:29px;color:#1B2B4B;">～</div>
<div class="t a" style="left:2753.47px;top:239.00px;font-size:27px;color:#1B2B4B;">16/7</div>
<div class="t p" style="left:2931.00px;top:236.00px;font-size:27.5px;color:#7B879F;letter-spacing:0.230px;">Week 28</div>
<div class="t p" style="left:3156.80px;top:234.00px;font-size:27.5px;color:#1E9AE8;letter-spacing:0.388px;">Search</div>
<div class="t a" style="left:106.70px;top:355.00px;font-size:27px;color:#1B2B4B;letter-spacing:0.322px;">Daily</div>
<div class="t a" style="left:246.70px;top:355.00px;font-size:27px;color:#1B2B4B;letter-spacing:-0.085px;">Weekly</div>
<div class="t a" style="left:394.00px;top:355.00px;font-size:27px;color:#0A8FE6;font-weight:700;letter-spacing:0.140px;">Monthly</div>
<div class="t a" style="left:620.00px;top:356.00px;font-size:27px;color:#0A8FE6;letter-spacing:0.241px;">Current: Week 28</div>
<div class="t p" style="left:2670.60px;top:353.00px;font-size:27.5px;color:#1B2B4B;letter-spacing:0.530px;">More Actions</div>
<div class="t p" style="left:2969.00px;top:353.00px;font-size:27.5px;color:#FFFFFF;letter-spacing:0.203px;">Save</div>
<div class="t p" style="left:3160.00px;top:353.00px;font-size:27.5px;color:#1B2B4B;letter-spacing:0.717px;">Next</div>
<div class="t a" style="left:135.40px;top:455.00px;font-size:32px;color:#0A8FE6;font-weight:700;letter-spacing:-0.095px;">Sales data analysis</div>
<div class="t a" style="left:482.00px;top:460.00px;font-size:27px;color:#7B879F;letter-spacing:0.112px;">Analysis of customer order quantity</div>
<div class="t p" style="left:2289.00px;top:460.00px;font-size:26px;color:#3E4C6B;letter-spacing:-0.331px;">Sales</div>
<div class="t p" style="left:2444.00px;top:460.00px;font-size:26px;color:#3E4C6B;letter-spacing:0.062px;">Same Period Last Year</div>
<div class="t p" style="left:2793.00px;top:460.00px;font-size:26px;color:#3E4C6B;letter-spacing:-0.080px;">Sales Forecast</div>
<div class="t p" style="left:3027.00px;top:460.00px;font-size:26px;color:#3E4C6B;letter-spacing:-0.801px;">Actual</div>
<div class="t p" style="left:3168.00px;top:460.00px;font-size:26px;color:#3E4C6B;letter-spacing:-0.260px;">Target</div>
<div class="t p" style="left:56.70px;top:521.00px;font-size:26px;color:#7B879F;letter-spacing:-0.510px;">Predicted value</div>
<div class="t p" style="left:147.90px;top:571.00px;font-size:26px;color:#808BA2;letter-spacing:0.510px;">300000</div>
<div class="t p" style="left:146.90px;top:621.00px;font-size:26px;color:#808BA2;letter-spacing:0.710px;">250000</div>
<div class="t p" style="left:146.90px;top:673.00px;font-size:26px;color:#808BA2;letter-spacing:0.710px;">200000</div>
<div class="t p" style="left:151.20px;top:726.00px;font-size:26px;color:#808BA2;letter-spacing:-0.150px;">150000</div>
<div class="t p" style="left:151.20px;top:780.00px;font-size:26px;color:#808BA2;letter-spacing:-0.150px;">100000</div>
<div class="t p" style="left:165.30px;top:835.00px;font-size:26px;color:#808BA2;letter-spacing:0.195px;">50000</div>
<div class="t p" style="left:222.60px;top:889.00px;font-size:26px;color:#808BA2;">0</div>
<div class="t p" style="left:314.06px;top:927.00px;font-size:25px;color:#808BA2;">01</div>
<div class="t p" style="left:412.66px;top:927.00px;font-size:25px;color:#808BA2;">02</div>
<div class="t p" style="left:503.66px;top:927.00px;font-size:25px;color:#808BA2;">03</div>
<div class="t p" style="left:610.36px;top:927.00px;font-size:25px;color:#808BA2;">04</div>
<div class="t p" style="left:704.76px;top:927.00px;font-size:25px;color:#808BA2;">05</div>
<div class="t p" style="left:799.96px;top:927.00px;font-size:25px;color:#808BA2;">06</div>
<div class="t p" style="left:902.06px;top:927.00px;font-size:25px;color:#808BA2;">07</div>
<div class="t p" style="left:997.76px;top:927.00px;font-size:25px;color:#808BA2;">08</div>
<div class="t p" style="left:1095.66px;top:927.00px;font-size:25px;color:#808BA2;">09</div>
<div class="t p" style="left:1195.36px;top:927.00px;font-size:25px;color:#808BA2;">10</div>
<div class="t p" style="left:1292.86px;top:927.00px;font-size:25px;color:#808BA2;">11</div>
<div class="t p" style="left:1389.06px;top:927.00px;font-size:25px;color:#808BA2;">12</div>
<div class="t p" style="left:1486.96px;top:927.00px;font-size:25px;color:#808BA2;">13</div>
<div class="t p" style="left:1581.76px;top:927.00px;font-size:25px;color:#808BA2;">14</div>
<div class="t p" style="left:1680.16px;top:927.00px;font-size:25px;color:#808BA2;">15</div>
<div class="t p" style="left:1782.76px;top:927.00px;font-size:25px;color:#808BA2;">16</div>
<div class="t p" style="left:1876.16px;top:927.00px;font-size:25px;color:#808BA2;">17</div>
<div class="t p" style="left:1973.56px;top:927.00px;font-size:25px;color:#808BA2;">18</div>
<div class="t p" style="left:2071.96px;top:927.00px;font-size:25px;color:#808BA2;">19</div>
<div class="t p" style="left:2172.36px;top:927.00px;font-size:25px;color:#808BA2;">20</div>
<div class="t p" style="left:2271.26px;top:927.00px;font-size:25px;color:#808BA2;">21</div>
<div class="t p" style="left:2365.56px;top:927.00px;font-size:25px;color:#808BA2;">22</div>
<div class="t p" style="left:2465.36px;top:927.00px;font-size:25px;color:#808BA2;">23</div>
<div class="t p" style="left:2565.06px;top:927.00px;font-size:25px;color:#808BA2;">24</div>
<div class="t p" style="left:2661.36px;top:927.00px;font-size:25px;color:#808BA2;">25</div>
<div class="t p" style="left:2756.96px;top:927.00px;font-size:25px;color:#808BA2;">26</div>
<div class="t p" style="left:2859.16px;top:927.00px;font-size:25px;color:#808BA2;">27</div>
<div class="t p" style="left:2956.56px;top:927.00px;font-size:25px;color:#808BA2;">28</div>
<div class="t p" style="left:3050.06px;top:927.00px;font-size:25px;color:#808BA2;">29</div>
<div class="t p" style="left:3150.26px;top:927.00px;font-size:25px;color:#808BA2;">30</div>
<div class="t a" style="left:52.20px;top:1051.00px;font-size:27px;color:#1B2B4B;font-weight:700;letter-spacing:0.074px;">Sales Target</div>
<div class="t a" style="left:536.00px;top:1051.00px;font-size:27px;color:#1B2B4B;font-weight:700;letter-spacing:-0.070px;">Quota</div>
<div class="t p" style="left:752.70px;top:1050.00px;font-size:27.5px;color:#1B2B4B;letter-spacing:0.327px;">10/7 Monday</div>
<div class="t p" style="left:1132.60px;top:1050.00px;font-size:27.5px;color:#E0762F;">11/7 Tuesday</div>
<div class="t p" style="left:1481.60px;top:1050.00px;font-size:27.5px;color:#1B2B4B;letter-spacing:0.395px;">12/7 Wednesday</div>
<div class="t p" style="left:1875.30px;top:1050.00px;font-size:27.5px;color:#1B2B4B;letter-spacing:0.204px;">13/7 Thursday</div>
<div class="t p" style="left:2272.00px;top:1050.00px;font-size:27.5px;color:#1B2B4B;letter-spacing:0.423px;">14/7 Friday</div>
<div class="t p" style="left:2632.00px;top:1050.00px;font-size:27.5px;color:#1B2B4B;letter-spacing:0.321px;">15/7 Saturday</div>
<div class="t p" style="left:3030.50px;top:1050.00px;font-size:27.5px;color:#1B2B4B;letter-spacing:0.318px;">16/7 Sunday</div>
<div class="t a" style="left:102.60px;top:1141.00px;font-size:27px;color:#3E4C6B;font-weight:700;letter-spacing:0.071px;">Store Forecast</div>
<div class="t p" style="left:77.50px;top:1211.00px;font-size:27.5px;color:#3E4C6B;letter-spacing:-0.164px;">Shop Floor</div>
<div class="t p" style="left:76.50px;top:1289.00px;font-size:27.5px;color:#3E4C6B;letter-spacing:1.200px;">RX</div>
<div class="t p" style="left:76.50px;top:1362.00px;font-size:27.5px;color:#3E4C6B;letter-spacing:0.141px;">Bulk sale</div>
<div class="t a" style="left:102.60px;top:1441.00px;font-size:27px;color:#3E4C6B;font-weight:700;letter-spacing:0.113px;">System Forecast</div>
<div class="t a" style="left:102.60px;top:1514.00px;font-size:27px;color:#3E4C6B;font-weight:700;letter-spacing:0.076px;">Actual Sales</div>
<div class="t p" style="left:79.30px;top:1585.00px;font-size:27.5px;color:#3E4C6B;letter-spacing:-0.115px;">Health</div>
<div class="t p" style="left:79.30px;top:1659.00px;font-size:27.5px;color:#3E4C6B;">Beauty</div>
<div class="t p" style="left:79.30px;top:1734.00px;font-size:27.5px;color:#3E4C6B;letter-spacing:0.274px;">Personal Care</div>
<div class="t p" style="left:79.30px;top:1808.00px;font-size:27.5px;color:#3E4C6B;">Baby</div>
<div class="t p" style="left:80.30px;top:1884.00px;font-size:27.5px;color:#3E4C6B;">Confect</div>
<div class="t p" style="left:80.30px;top:1959.00px;font-size:27.5px;color:#3E4C6B;">Others</div>
<div class="t p" style="left:81.30px;top:2032.00px;font-size:27.5px;color:#3E4C6B;font-weight:500;letter-spacing:-0.171px;">Total (incl.Bulk)</div>
<div class="t p" style="left:79.30px;top:2111.00px;font-size:27.5px;color:#3E4C6B;">Bulk</div>
<div class="t p" style="left:482.90px;top:1138.00px;font-size:27.5px;color:#3E4C6B;letter-spacing:-0.258px;">1,162,847</div>
<div class="t p" style="left:495.80px;top:1211.00px;font-size:27.5px;color:#3E4C6B;letter-spacing:1.157px;">930,354</div>
<div class="t p" style="left:496.54px;top:1287.00px;font-size:27.5px;color:#3E4C6B;letter-spacing:1.200px;">232,493</div>
<div class="t p" style="left:496.54px;top:1363.00px;font-size:27.5px;color:#3E4C6B;letter-spacing:1.200px;">232,493</div>
<div class="t p" style="left:482.90px;top:1435.00px;font-size:27.5px;color:#3E4C6B;letter-spacing:-0.258px;">1,642,160</div>
<div class="t p" style="left:504.70px;top:1511.00px;font-size:27.5px;color:#3E4C6B;letter-spacing:0.157px;">585,165</div>
<div class="t p" style="left:429.80px;top:1585.00px;font-size:27.5px;color:#3E4C6B;letter-spacing:0.157px;">585,165</div>
<div class="t p" style="left:546.70px;top:1589.00px;font-size:23.4px;color:#8B95AB;letter-spacing:0.318px;">30%</div>
<div class="t p" style="left:429.80px;top:1661.00px;font-size:27.5px;color:#3E4C6B;letter-spacing:0.157px;">585,165</div>
<div class="t p" style="left:546.70px;top:1665.00px;font-size:23.4px;color:#8B95AB;letter-spacing:0.318px;">30%</div>
<div class="t p" style="left:429.80px;top:1736.00px;font-size:27.5px;color:#3E4C6B;letter-spacing:0.157px;">585,165</div>
<div class="t p" style="left:546.70px;top:1740.00px;font-size:23.4px;color:#8B95AB;letter-spacing:0.318px;">30%</div>
<div class="t p" style="left:429.80px;top:1809.00px;font-size:27.5px;color:#3E4C6B;letter-spacing:0.157px;">585,165</div>
<div class="t p" style="left:546.70px;top:1813.00px;font-size:23.4px;color:#8B95AB;letter-spacing:0.318px;">30%</div>
<div class="t p" style="left:445.40px;top:1884.00px;font-size:27.5px;color:#3E4C6B;letter-spacing:0.121px;">25,165</div>
<div class="t p" style="left:546.70px;top:1888.00px;font-size:23.4px;color:#8B95AB;letter-spacing:0.318px;">30%</div>
<div class="t p" style="left:445.40px;top:1957.00px;font-size:27.5px;color:#3E4C6B;letter-spacing:0.121px;">25,165</div>
<div class="t p" style="left:546.70px;top:1961.00px;font-size:23.4px;color:#8B95AB;letter-spacing:0.318px;">30%</div>
<div class="t p" style="left:520.30px;top:2031.00px;font-size:27.5px;color:#3E4C6B;letter-spacing:0.121px;">25,165</div>
<div class="t p" style="left:535.90px;top:2110.00px;font-size:27.5px;color:#3E4C6B;letter-spacing:0.067px;">1,265</div>
<div class="t p" style="left:787.40px;top:1138.00px;font-size:27.5px;color:#3E4C6B;letter-spacing:0.324px;">124,564</div>
<div class="t p" style="left:1167.60px;top:1138.00px;font-size:27.5px;color:#3E4C6B;letter-spacing:0.324px;">124,564</div>
<div class="t p" style="left:1543.00px;top:1138.00px;font-size:27.5px;color:#3E4C6B;letter-spacing:0.324px;">124,564</div>
<div class="t p" style="left:1918.10px;top:1138.00px;font-size:27.5px;color:#3E4C6B;letter-spacing:0.324px;">124,564</div>
<div class="t p" style="left:2298.30px;top:1138.00px;font-size:27.5px;color:#3E4C6B;letter-spacing:0.324px;">124,564</div>
<div class="t p" style="left:2678.40px;top:1138.00px;font-size:27.5px;color:#3E4C6B;letter-spacing:0.324px;">124,564</div>
<div class="t p" style="left:3062.60px;top:1138.00px;font-size:27.5px;color:#3E4C6B;letter-spacing:0.324px;">124,564</div>
<div class="t p" style="left:799.51px;top:1211.00px;font-size:27.5px;color:#3E4C6B;letter-spacing:1.200px;">97,585</div>
<div class="t p" style="left:1176.70px;top:1211.00px;font-size:27.5px;color:#3E4C6B;letter-spacing:1.121px;">83,566</div>
<div class="t p" style="left:1542.90px;top:1211.00px;font-size:27.5px;color:#3E4C6B;letter-spacing:0.490px;">130,445</div>
<div class="t p" style="left:1917.90px;top:1211.00px;font-size:27.5px;color:#3E4C6B;letter-spacing:0.490px;">122,967</div>
<div class="t p" style="left:2303.30px;top:1211.00px;font-size:27.5px;color:#3E4C6B;letter-spacing:-0.510px;">138,981</div>
<div class="t p" style="left:2677.30px;top:1211.00px;font-size:27.5px;color:#3E4C6B;letter-spacing:0.324px;">162,544</div>
<div class="t p" style="left:3061.30px;top:1211.00px;font-size:27.5px;color:#3E4C6B;letter-spacing:0.324px;">194,266</div>
<div class="t p" style="left:798.90px;top:1287.00px;font-size:27.5px;color:#3E4C6B;letter-spacing:1.121px;">24,564</div>
<div class="t p" style="left:1177.31px;top:1287.00px;font-size:27.5px;color:#3E4C6B;letter-spacing:1.200px;">24,539</div>
<div class="t p" style="left:1555.11px;top:1287.00px;font-size:27.5px;color:#3E4C6B;letter-spacing:1.200px;">23,475</div>
<div class="t p" style="left:1930.11px;top:1287.00px;font-size:27.5px;color:#3E4C6B;letter-spacing:1.200px;">22,439</div>
<div class="t p" style="left:2315.90px;top:1287.00px;font-size:27.5px;color:#3E4C6B;letter-spacing:-0.079px;">58,612</div>
<div class="t p" style="left:2689.90px;top:1287.00px;font-size:27.5px;color:#3E4C6B;letter-spacing:1.121px;">43,972</div>
<div class="t p" style="left:3073.90px;top:1287.00px;font-size:27.5px;color:#3E4C6B;letter-spacing:1.121px;">34,892</div>
<div class="t p" style="left:798.90px;top:1363.00px;font-size:27.5px;color:#3E4C6B;letter-spacing:1.121px;">24,564</div>
<div class="t p" style="left:1177.31px;top:1363.00px;font-size:27.5px;color:#3E4C6B;letter-spacing:1.200px;">24,539</div>
<div class="t p" style="left:1555.11px;top:1363.00px;font-size:27.5px;color:#3E4C6B;letter-spacing:1.200px;">23,475</div>
<div class="t p" style="left:1930.11px;top:1363.00px;font-size:27.5px;color:#3E4C6B;letter-spacing:1.200px;">22,439</div>
<div class="t p" style="left:2315.90px;top:1363.00px;font-size:27.5px;color:#3E4C6B;letter-spacing:-0.079px;">58,612</div>
<div class="t p" style="left:2689.90px;top:1363.00px;font-size:27.5px;color:#3E4C6B;letter-spacing:1.121px;">43,972</div>
<div class="t p" style="left:3073.90px;top:1363.00px;font-size:27.5px;color:#3E4C6B;letter-spacing:1.121px;">34,892</div>
<div class="t p" style="left:787.30px;top:1435.00px;font-size:27.5px;color:#3E4C6B;letter-spacing:0.490px;">176,593</div>
<div class="t p" style="left:1171.10px;top:1435.00px;font-size:27.5px;color:#3E4C6B;letter-spacing:-0.676px;">168,214</div>
<div class="t p" style="left:1538.64px;top:1435.00px;font-size:27.5px;color:#3E4C6B;letter-spacing:1.200px;">240,358</div>
<div class="t p" style="left:1913.64px;top:1435.00px;font-size:27.5px;color:#3E4C6B;letter-spacing:1.200px;">203,368</div>
<div class="t p" style="left:2293.04px;top:1435.00px;font-size:27.5px;color:#3E4C6B;letter-spacing:1.200px;">263,960</div>
<div class="t p" style="left:2678.30px;top:1435.00px;font-size:27.5px;color:#3E4C6B;letter-spacing:0.157px;">274,196</div>
<div class="t p" style="left:3069.30px;top:1435.00px;font-size:27.5px;color:#3E4C6B;letter-spacing:-0.843px;">315,471</div>
<div class="t p" style="left:787.30px;top:1511.00px;font-size:27.5px;color:#3E4C6B;letter-spacing:0.490px;">174,563</div>
<div class="t p" style="left:1171.10px;top:1511.00px;font-size:27.5px;color:#3E4C6B;letter-spacing:-0.676px;">158,714</div>
<div class="t p" style="left:1538.64px;top:1511.00px;font-size:27.5px;color:#3E4C6B;letter-spacing:1.200px;">220,358</div>
<div class="t p" style="left:1957.10px;top:1508.00px;font-size:31px;color:#7C879F;">–</div>
<div class="t p" style="left:2337.50px;top:1508.00px;font-size:31px;color:#7C879F;">–</div>
<div class="t p" style="left:2719.50px;top:1508.00px;font-size:31px;color:#7C879F;">–</div>
<div class="t p" style="left:3095.00px;top:1508.00px;font-size:31px;color:#7C879F;">–</div>
<div class="t p" style="left:787.30px;top:1585.00px;font-size:27.5px;color:#3E4C6B;letter-spacing:0.490px;">174,563</div>
<div class="t p" style="left:928.00px;top:1589.00px;font-size:23.4px;color:#8B95AB;letter-spacing:0.138px;">22.3%</div>
<div class="t p" style="left:1171.10px;top:1585.00px;font-size:27.5px;color:#3E4C6B;letter-spacing:-0.676px;">158,714</div>
<div class="t p" style="left:1310.60px;top:1589.00px;font-size:23.4px;color:#8B95AB;letter-spacing:0.138px;">22.3%</div>
<div class="t p" style="left:1538.64px;top:1585.00px;font-size:27.5px;color:#3E4C6B;letter-spacing:1.200px;">220,358</div>
<div class="t p" style="left:1681.00px;top:1589.00px;font-size:23.4px;color:#8B95AB;letter-spacing:0.138px;">22.3%</div>
<div class="t p" style="left:1957.10px;top:1583.00px;font-size:31px;color:#9AA3B6;">–</div>
<div class="t p" style="left:2337.50px;top:1583.00px;font-size:31px;color:#9AA3B6;">–</div>
<div class="t p" style="left:2719.50px;top:1583.00px;font-size:31px;color:#9AA3B6;">–</div>
<div class="t p" style="left:3095.00px;top:1583.00px;font-size:31px;color:#9AA3B6;">–</div>
<div class="t p" style="left:787.30px;top:1661.00px;font-size:27.5px;color:#3E4C6B;letter-spacing:0.490px;">174,563</div>
<div class="t p" style="left:928.00px;top:1665.00px;font-size:23.4px;color:#8B95AB;letter-spacing:0.138px;">22.3%</div>
<div class="t p" style="left:1171.10px;top:1661.00px;font-size:27.5px;color:#3E4C6B;letter-spacing:-0.676px;">158,714</div>
<div class="t p" style="left:1310.60px;top:1665.00px;font-size:23.4px;color:#8B95AB;letter-spacing:0.138px;">22.3%</div>
<div class="t p" style="left:1538.64px;top:1661.00px;font-size:27.5px;color:#3E4C6B;letter-spacing:1.200px;">220,358</div>
<div class="t p" style="left:1681.00px;top:1665.00px;font-size:23.4px;color:#8B95AB;letter-spacing:0.138px;">22.3%</div>
<div class="t p" style="left:1957.10px;top:1658.00px;font-size:31px;color:#9AA3B6;">–</div>
<div class="t p" style="left:2337.50px;top:1658.00px;font-size:31px;color:#9AA3B6;">–</div>
<div class="t p" style="left:2719.50px;top:1658.00px;font-size:31px;color:#9AA3B6;">–</div>
<div class="t p" style="left:3095.00px;top:1658.00px;font-size:31px;color:#9AA3B6;">–</div>
<div class="t p" style="left:787.30px;top:1736.00px;font-size:27.5px;color:#3E4C6B;letter-spacing:0.490px;">174,563</div>
<div class="t p" style="left:928.00px;top:1740.00px;font-size:23.4px;color:#8B95AB;letter-spacing:0.138px;">22.3%</div>
<div class="t p" style="left:1171.10px;top:1736.00px;font-size:27.5px;color:#3E4C6B;letter-spacing:-0.676px;">158,714</div>
<div class="t p" style="left:1310.60px;top:1740.00px;font-size:23.4px;color:#8B95AB;letter-spacing:0.138px;">22.3%</div>
<div class="t p" style="left:1538.64px;top:1736.00px;font-size:27.5px;color:#3E4C6B;letter-spacing:1.200px;">220,358</div>
<div class="t p" style="left:1681.00px;top:1740.00px;font-size:23.4px;color:#8B95AB;letter-spacing:0.138px;">22.3%</div>
<div class="t p" style="left:1957.10px;top:1733.00px;font-size:31px;color:#9AA3B6;">–</div>
<div class="t p" style="left:2337.50px;top:1733.00px;font-size:31px;color:#9AA3B6;">–</div>
<div class="t p" style="left:2719.50px;top:1733.00px;font-size:31px;color:#9AA3B6;">–</div>
<div class="t p" style="left:3095.00px;top:1733.00px;font-size:31px;color:#9AA3B6;">–</div>
<div class="t p" style="left:787.30px;top:1809.00px;font-size:27.5px;color:#3E4C6B;letter-spacing:0.490px;">174,563</div>
<div class="t p" style="left:928.00px;top:1813.00px;font-size:23.4px;color:#8B95AB;letter-spacing:0.138px;">22.3%</div>
<div class="t p" style="left:1171.10px;top:1809.00px;font-size:27.5px;color:#3E4C6B;letter-spacing:-0.676px;">158,714</div>
<div class="t p" style="left:1310.60px;top:1813.00px;font-size:23.4px;color:#8B95AB;letter-spacing:0.138px;">22.3%</div>
<div class="t p" style="left:1538.64px;top:1809.00px;font-size:27.5px;color:#3E4C6B;letter-spacing:1.200px;">220,358</div>
<div class="t p" style="left:1681.00px;top:1813.00px;font-size:23.4px;color:#8B95AB;letter-spacing:0.138px;">22.3%</div>
<div class="t p" style="left:1957.10px;top:1806.00px;font-size:31px;color:#9AA3B6;">–</div>
<div class="t p" style="left:2337.50px;top:1806.00px;font-size:31px;color:#9AA3B6;">–</div>
<div class="t p" style="left:2719.50px;top:1806.00px;font-size:31px;color:#9AA3B6;">–</div>
<div class="t p" style="left:3095.00px;top:1806.00px;font-size:31px;color:#9AA3B6;">–</div>
<div class="t p" style="left:818.10px;top:1884.00px;font-size:27.5px;color:#3E4C6B;letter-spacing:1.067px;">4,563</div>
<div class="t p" style="left:928.00px;top:1888.00px;font-size:23.4px;color:#8B95AB;letter-spacing:0.138px;">22.3%</div>
<div class="t p" style="left:1200.90px;top:1884.00px;font-size:27.5px;color:#3E4C6B;letter-spacing:-0.433px;">8,714</div>
<div class="t p" style="left:1310.60px;top:1888.00px;font-size:23.4px;color:#8B95AB;letter-spacing:0.138px;">22.3%</div>
<div class="t p" style="left:1576.10px;top:1884.00px;font-size:27.5px;color:#3E4C6B;letter-spacing:0.067px;">1,358</div>
<div class="t p" style="left:1681.00px;top:1888.00px;font-size:23.4px;color:#8B95AB;letter-spacing:0.138px;">22.3%</div>
<div class="t p" style="left:1957.10px;top:1881.00px;font-size:31px;color:#3E4C6B;">–</div>
<div class="t p" style="left:2337.50px;top:1881.00px;font-size:31px;color:#3E4C6B;">–</div>
<div class="t p" style="left:2719.50px;top:1881.00px;font-size:31px;color:#3E4C6B;">–</div>
<div class="t p" style="left:3095.00px;top:1881.00px;font-size:31px;color:#3E4C6B;">–</div>
<div class="t p" style="left:818.10px;top:1957.00px;font-size:27.5px;color:#3E4C6B;letter-spacing:1.067px;">4,563</div>
<div class="t p" style="left:928.00px;top:1961.00px;font-size:23.4px;color:#8B95AB;letter-spacing:0.138px;">22.3%</div>
<div class="t p" style="left:1200.90px;top:1957.00px;font-size:27.5px;color:#3E4C6B;letter-spacing:-0.433px;">8,714</div>
<div class="t p" style="left:1310.60px;top:1961.00px;font-size:23.4px;color:#8B95AB;letter-spacing:0.138px;">22.3%</div>
<div class="t p" style="left:1576.10px;top:1957.00px;font-size:27.5px;color:#3E4C6B;letter-spacing:0.067px;">1,358</div>
<div class="t p" style="left:1681.00px;top:1961.00px;font-size:23.4px;color:#8B95AB;letter-spacing:0.138px;">22.3%</div>
<div class="t p" style="left:1957.10px;top:1955.00px;font-size:31px;color:#3E4C6B;">–</div>
<div class="t p" style="left:2337.50px;top:1955.00px;font-size:31px;color:#3E4C6B;">–</div>
<div class="t p" style="left:2719.50px;top:1955.00px;font-size:31px;color:#3E4C6B;">–</div>
<div class="t p" style="left:3095.00px;top:1955.00px;font-size:31px;color:#3E4C6B;">–</div>
<div class="t p" style="left:818.10px;top:2031.00px;font-size:27.5px;color:#3E4C6B;letter-spacing:1.067px;">4,563</div>
<div class="t p" style="left:1200.90px;top:2031.00px;font-size:27.5px;color:#3E4C6B;letter-spacing:-0.433px;">8,714</div>
<div class="t p" style="left:1576.10px;top:2031.00px;font-size:27.5px;color:#3E4C6B;letter-spacing:0.067px;">1,358</div>
<div class="t p" style="left:1957.10px;top:2028.00px;font-size:31px;color:#3E4C6B;">–</div>
<div class="t p" style="left:2337.50px;top:2028.00px;font-size:31px;color:#3E4C6B;">–</div>
<div class="t p" style="left:2719.50px;top:2028.00px;font-size:31px;color:#3E4C6B;">–</div>
<div class="t p" style="left:3095.00px;top:2028.00px;font-size:31px;color:#3E4C6B;">–</div>
<div class="t p" style="left:841.88px;top:2110.00px;font-size:27.5px;color:#3E4C6B;letter-spacing:1.200px;">563</div>
<div class="t p" style="left:1211.50px;top:2107.00px;font-size:31px;color:#3E4C6B;">–</div>
<div class="t p" style="left:1598.70px;top:2110.00px;font-size:27.5px;color:#3E4C6B;letter-spacing:-0.862px;">212</div>
<div class="t p" style="left:1957.10px;top:2107.00px;font-size:31px;color:#3E4C6B;">–</div>
<div class="t p" style="left:2337.50px;top:2107.00px;font-size:31px;color:#3E4C6B;">–</div>
<div class="t p" style="left:2719.50px;top:2107.00px;font-size:31px;color:#3E4C6B;">–</div>
<div class="t p" style="left:3114.08px;top:2110.00px;font-size:27.5px;color:#3E4C6B;letter-spacing:1.200px;">425</div>
</div></div>
</body></html>
